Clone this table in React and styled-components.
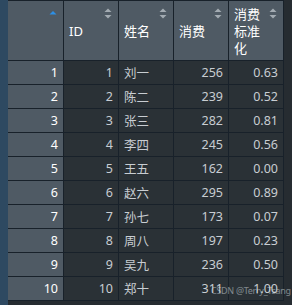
import styled, { createGlobalStyle } from "styled-components";

const GlobalStyle = createGlobalStyle`
  html, body {
    margin: 0;
    padding: 0;
    background: #262c31;
    font-family: "Noto Sans", "Noto Sans CJK SC", sans-serif;
  }
`;

const rows = [
  { id: 1, name: "刘一", spend: 256, norm: "0.63" },
  { id: 2, name: "陈二", spend: 239, norm: "0.52" },
  { id: 3, name: "张三", spend: 282, norm: "0.81" },
  { id: 4, name: "李四", spend: 245, norm: "0.56" },
  { id: 5, name: "王五", spend: 162, norm: "0.00" },
  { id: 6, name: "赵六", spend: 295, norm: "0.89" },
  { id: 7, name: "孙七", spend: 173, norm: "0.07" },
  { id: 8, name: "周八", spend: 197, norm: "0.23" },
  { id: 9, name: "吴九", spend: 236, norm: "0.50" },
  { id: 10, name: "郑十", spend: 311, norm: "1.00" },
];

const Page = styled.div`
  position: relative;
  display: flex;
  width: 292px;
  height: 305px;
  overflow: hidden;
`;

const SideStrip = styled.div`
  width: 8px;
  flex: none;
  background: #2e4961;
`;

const Grid = styled.div`
  display: grid;
  grid-template-columns: 56px 55px 55px 55px 55px;
  grid-auto-rows: 24px;
  grid-template-rows: 60px;
  align-self: flex-start;
  border-top: 1px solid #18212a;
`;

const HeadCell = styled.div`
  position: relative;
  box-sizing: border-box;
  display: flex;
  align-items: center;
  padding: 1px 0 0 5px;
  background: #4f5a64;
  border-right: 1px solid #18212a;
  border-bottom: 1px solid #18212a;
  color: #ffffff;
  font-size: 13px;
  line-height: 17px;
`;

const HeadLabel = styled.span`
  display: block;
  width: 28px;
  word-break: break-all;
`;

const SortIcon = styled.svg`
  position: absolute;
  top: 7px;
  right: 6px;
`;

const Cell = styled.div`
  box-sizing: border-box;
  display: flex;
  align-items: center;
  justify-content: ${(p) => (p.$left ? "flex-start" : "flex-end")};
  padding: 0 5px;
  background: ${(p) => (p.$index ? "#4f5a64" : "#2a3136")};
  border-right: 1px solid #18212a;
  border-bottom: 1px solid #18212a;
  color: ${(p) => (p.$index ? "#ffffff" : "#c8cdd2")};
  font-size: 12.5px;
  white-space: nowrap;
`;

const Watermark = styled.div`
  position: absolute;
  left: 211px;
  top: 284px;
  font-size: 9px;
  white-space: nowrap;
  color: rgba(220, 225, 230, 0.5);
  letter-spacing: -0.3px;
  pointer-events: none;
`;

const SortBoth = () => (
  <SortIcon width="8" height="11" viewBox="0 0 8 11">
    <path d="M4 0.5 L7.5 4 H0.5 Z" fill="#a3abb2" />
    <path d="M4 10.5 L7.5 7 H0.5 Z" fill="#a3abb2" />
  </SortIcon>
);

const SortAsc = () => (
  <SortIcon width="8" height="11" viewBox="0 0 8 11">
    <path d="M4 3 L7.5 6.5 H0.5 Z" fill="#2d8fe6" />
  </SortIcon>
);

const headers = ["ID", "姓名", "消费", "消费标准化"];

export default function App() {
  return (
    <>
      <GlobalStyle />
      <Page>
        <SideStrip />
        <Grid>
          <HeadCell>
            <SortAsc />
          </HeadCell>
          {headers.map((h) => (
            <HeadCell key={h}>
              <HeadLabel>{h}</HeadLabel>
              <SortBoth />
            </HeadCell>
          ))}
          {rows.map((r) => [
            <Cell key={`i${r.id}`} $index>
              {r.id}
            </Cell>,
            <Cell key={`d${r.id}`}>{r.id}</Cell>,
            <Cell key={`n${r.id}`} $left>
              {r.name}
            </Cell>,
            <Cell key={`s${r.id}`}>{r.spend}</Cell>,
            <Cell key={`z${r.id}`}>{r.norm}</Cell>,
          ])}
        </Grid>
        <Watermark>CSDN @Terry_Tsang</Watermark>
      </Page>
    </>
  );
}
